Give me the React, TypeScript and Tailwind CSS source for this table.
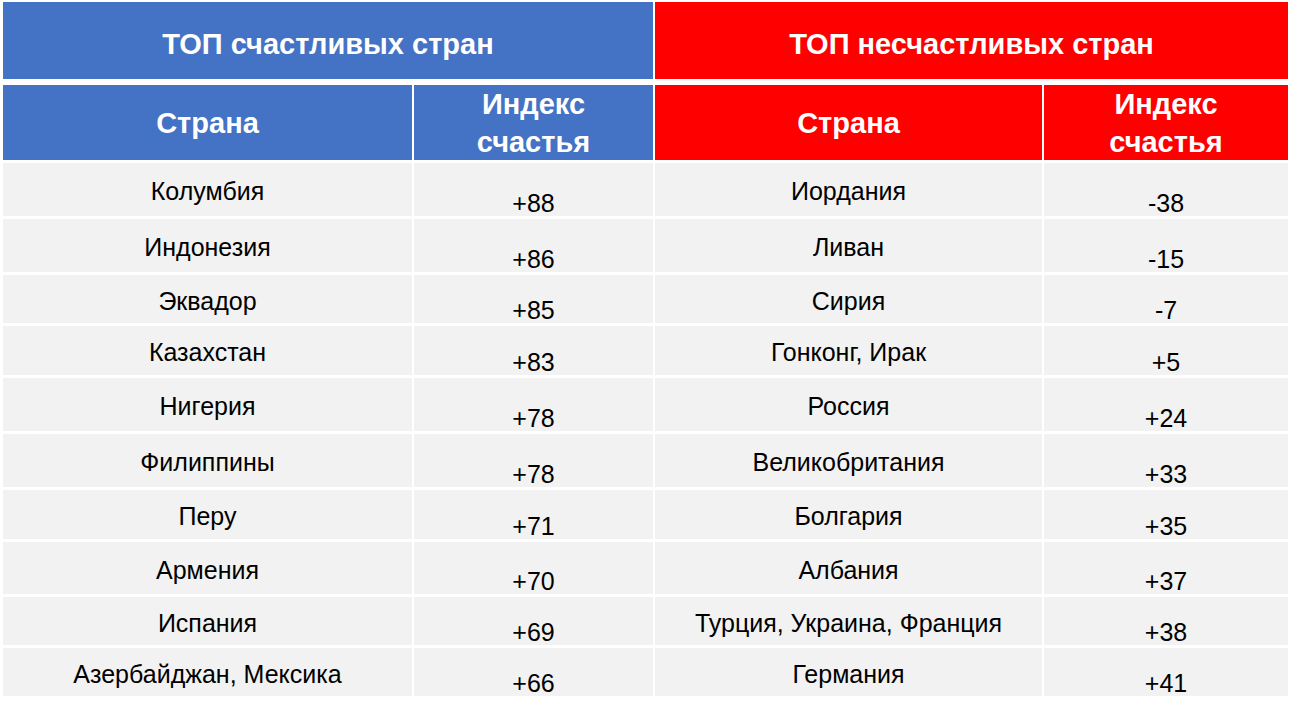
const happy: [string, string][] = [
  ['Колумбия', '+88'],
  ['Индонезия', '+86'],
  ['Эквадор', '+85'],
  ['Казахстан', '+83'],
  ['Нигерия', '+78'],
  ['Филиппины', '+78'],
  ['Перу', '+71'],
  ['Армения', '+70'],
  ['Испания', '+69'],
  ['Азербайджан, Мексика', '+66'],
]

const unhappy: [string, string][] = [
  ['Иордания', '-38'],
  ['Ливан', '-15'],
  ['Сирия', '-7'],
  ['Гонконг, Ирак', '+5'],
  ['Россия', '+24'],
  ['Великобритания', '+33'],
  ['Болгария', '+35'],
  ['Албания', '+37'],
  ['Турция, Украина, Франция', '+38'],
  ['Германия', '+41'],
]

// row heights read off the screenshot
const rowHeights = [53, 53, 48, 49, 53, 53, 49, 52, 48, 48]

function Half({
  title,
  rows,
  headBg,
  countryW,
  indexW,
}: {
  title: string
  rows: [string, string][]
  headBg: string
  countryW: string
  indexW: string
}) {
  return (
    <div className="flex flex-col">
      <div className={`${headBg} h-[77px] flex items-center justify-center pt-[8px] text-white font-bold text-[29px]`}>
        {title}
      </div>
      <div className="flex gap-[2px] mt-[6px]">
        <div className={`${headBg} ${countryW} h-[75px] flex items-center justify-center pt-[3px] text-white font-bold text-[29px]`}>
          Страна
        </div>
        <div className={`${headBg} ${indexW} h-[75px] flex flex-col items-center justify-center pt-[1px] text-white font-bold text-[29px] leading-[38px]`}>
          <span>Индекс</span>
          <span>счастья</span>
        </div>
      </div>
      <div className="flex flex-col gap-[3px] mt-[3px]">
        {rows.map(([name, value], i) => (
          <div key={name} className="flex gap-[2px]" style={{ height: rowHeights[i] }}>
            <div className={`${countryW} bg-[#f2f2f2] flex items-center justify-center pt-[5px] text-[25px] text-black`}>
              {name}
            </div>
            <div className={`${indexW} bg-[#f2f2f2] flex items-end justify-center text-[25px] leading-[25px] text-black`}>
              {value}
            </div>
          </div>
        ))}
      </div>
    </div>
  )
}

export default function App() {
  return (
    <div
      className="w-[1294px] h-[714px] bg-white overflow-hidden"
      style={{ fontFamily: '"Liberation Sans", Arial, sans-serif' }}
    >
      <div className="flex gap-[2px] ml-[3px] mt-[2px]">
        <Half
          title="ТОП счастливых стран"
          rows={happy}
          headBg="bg-[#4472c4]"
          countryW="w-[409px]"
          indexW="w-[239px]"
        />
        <Half
          title="ТОП несчастливых стран"
          rows={unhappy}
          headBg="bg-[#ff0000]"
          countryW="w-[387px]"
          indexW="w-[244px]"
        />
      </div>
    </div>
  )
}
